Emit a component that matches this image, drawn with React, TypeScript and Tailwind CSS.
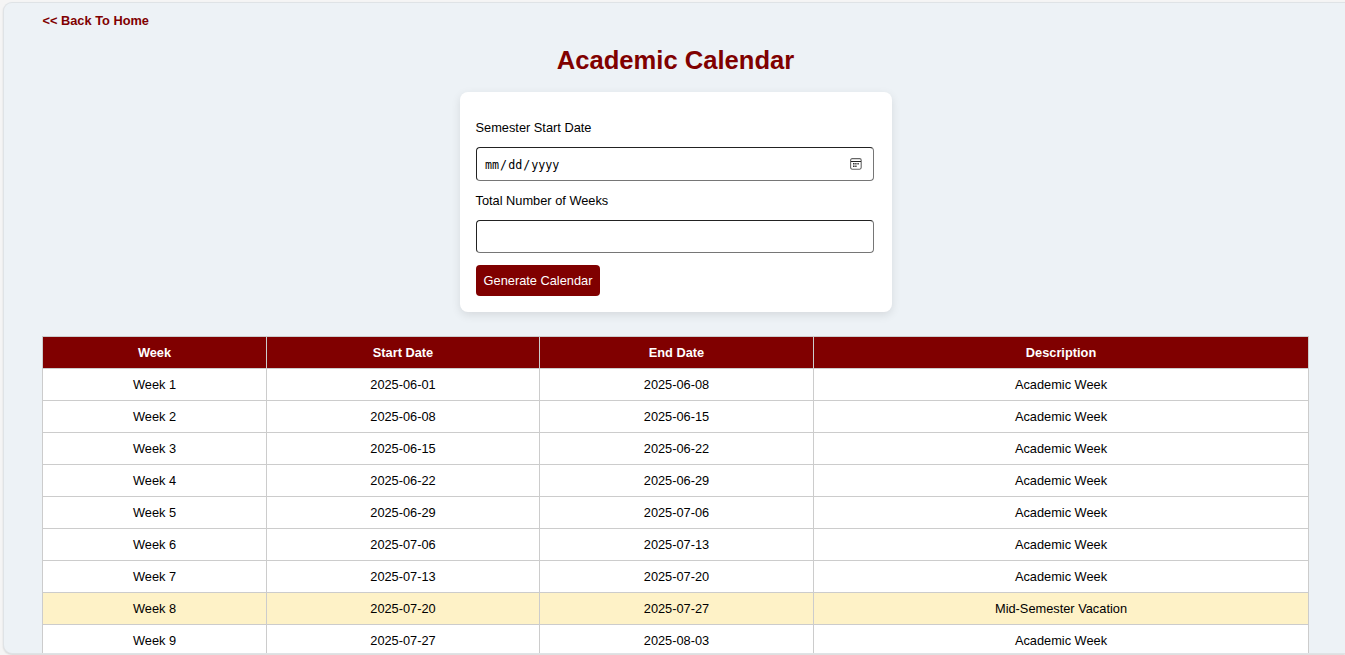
const rows = [
  ["Week 1", "2025-06-01", "2025-06-08", "Academic Week"],
  ["Week 2", "2025-06-08", "2025-06-15", "Academic Week"],
  ["Week 3", "2025-06-15", "2025-06-22", "Academic Week"],
  ["Week 4", "2025-06-22", "2025-06-29", "Academic Week"],
  ["Week 5", "2025-06-29", "2025-07-06", "Academic Week"],
  ["Week 6", "2025-07-06", "2025-07-13", "Academic Week"],
  ["Week 7", "2025-07-13", "2025-07-20", "Academic Week"],
  ["Week 8", "2025-07-20", "2025-07-27", "Mid-Semester Vacation"],
  ["Week 9", "2025-07-27", "2025-08-03", "Academic Week"],
];

const headings = ["Week", "Start Date", "End Date", "Description"];

function CalendarIcon() {
  return (
    <svg width="12" height="12" viewBox="0 0 12 12" fill="none">
      <rect x="0.6" y="0.6" width="10.6" height="10.6" rx="1.6" stroke="#666" strokeWidth="1.1" />
      <path d="M1 3.5h10" stroke="#222" />
      <path d="M3 5.7h1.6M5.2 5.7h1.4M7.4 5.7h1.4M3 8.2h1.6M5.2 8.2h1.4" stroke="#333" strokeWidth="1.5" />
    </svg>
  );
}

function DateInput() {
  return (
    <div className="mt-[12px] flex h-[34px] items-center justify-between rounded-[4px] border border-[#767676] border-t-[#222] border-l-[#222] bg-white pr-[11px] pl-[8.5px]">
      <div className="flex pt-[2px] font-['DejaVu_Sans_Mono',monospace] text-[11.7px] leading-[15px]">
        <span>mm</span>
        <span className="px-[1px]">/</span>
        <span>dd</span>
        <span className="px-[1px]">/</span>
        <span>yyyy</span>
      </div>
      <CalendarIcon />
    </div>
  );
}

export default function App() {
  return (
    <div className="h-[655px] overflow-hidden bg-[#f5f5f5] pt-[2px] pl-[3px] font-['Liberation_Sans',Arial,sans-serif] text-[12.8px] leading-[15px] text-black">
      <main className="h-[652px] overflow-hidden rounded-l-[9px] border border-r-0 border-[#dfe3e6] bg-[#edf2f6] pr-[36px] pl-[38px] shadow-[0_1px_2px_rgba(0,0,0,0.12)]">
        <a href="#" className="mt-[10px] ml-[0.5px] block w-fit font-bold text-[#800000]">
          &lt;&lt; Back To Home
        </a>
        <h1 className="mt-[17px] text-center text-[25.6px] leading-[30px] font-bold text-[#800000]">Academic Calendar</h1>
        <form className="mx-auto mt-[17px] h-[220px] w-[432px] rounded-[8px] bg-white pt-[28px] pr-[18px] pl-[16px] shadow-[0_3px_10px_rgba(0,0,0,0.1)]">
          <label className="block">Semester Start Date</label>
          <DateInput />
          <label className="mt-[12px] block">Total Number of Weeks</label>
          <input className="mt-[12px] block h-[33px] w-full rounded-[4px] border border-[#767676] border-t-[#222] border-l-[#222] bg-white px-2 outline-none" />
          <button type="button" className="mt-[12px] block h-[31px] w-[124px] rounded-[4px] bg-[#800000] pl-[1px] text-white">
            Generate Calendar
          </button>
        </form>
        <table className="mt-[24px] w-[1267px] table-fixed border-collapse bg-white text-center">
          <colgroup>
            <col className="w-[224px]" />
            <col className="w-[273px]" />
            <col className="w-[274px]" />
            <col className="w-[495px]" />
          </colgroup>
          <thead>
            <tr className="h-[32px] bg-[#800000] text-white">
              {headings.map((h) => (
                <th key={h} className="border border-[#ccc] p-0 font-bold">{h}</th>
              ))}
            </tr>
          </thead>
          <tbody>
            {rows.map((row) => (
              <tr key={row[0]} className={row[3] === "Academic Week" ? "h-[32px]" : "h-[32px] bg-[#fef2c7]"}>
                {row.map((cell, i) => (
                  <td key={i} className="border border-[#ccc] p-0">{cell}</td>
                ))}
              </tr>
            ))}
          </tbody>
        </table>
      </main>
    </div>
  );
}
